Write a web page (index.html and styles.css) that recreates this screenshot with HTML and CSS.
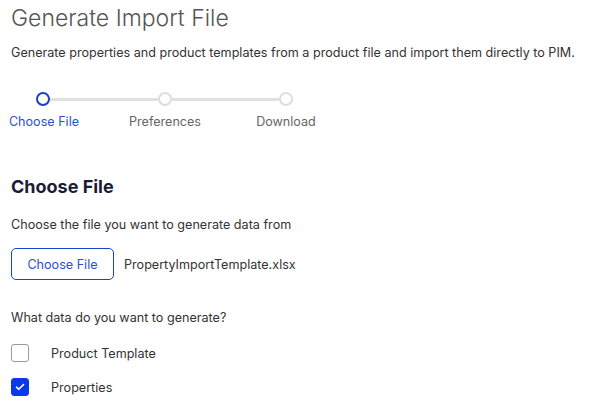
FILE: index.html
```html
<!DOCTYPE html>
<html lang="en">
<head>
    <meta charset="UTF-8">
    <title>Generate Import File</title>
    <link rel="stylesheet" href="styles.css">
</head>
<body>
    <div class="page">
        <h1 class="title">Generate Import File</h1>
        <p class="intro">Generate properties and product templates from a product file and import them directly to PIM.</p>

        <!-- Stepper -->
        <div class="stepper">
            <div class="track">
                <span class="dot active"></span>
                <span class="line"></span>
                <span class="dot"></span>
                <span class="line"></span>
                <span class="dot"></span>
            </div>
            <div class="labels">
                <span class="label active">Choose File</span>
                <span class="label">Preferences</span>
                <span class="label">Download</span>
            </div>
        </div>

        <h2 class="section-title">Choose File</h2>
        <p class="hint">Choose the file you want to generate data from</p>
        <div class="file-row">
            <button type="button" class="btn-outline">Choose File</button>
            <span class="file-name">PropertyImportTemplate.xlsx</span>
        </div>

        <p class="hint question">What data do you want to generate?</p>
        <div class="options">
            <label class="option">
                <span class="box"></span>
                <span>Product Template</span>
            </label>
            <label class="option">
                <span class="box checked">
                    <svg width="10" height="8" viewBox="0 0 10 8"><path d="M1.5 4.2 L3.8 6.3 L8.5 1.6" fill="none" stroke="#fff" stroke-width="1.6" stroke-linecap="round" stroke-linejoin="round"/></svg>
                </span>
                <span>Properties</span>
            </label>
        </div>
    </div>
</body>
</html>
```

FILE: styles.css
```css
* {
    margin: 0;
    padding: 0;
    box-sizing: border-box;
}

body {
    font-family: Inter, "Noto Sans", sans-serif;
    background: #fff;
    color: #333;
}

.page {
    padding: 4px 11px 0;
}

/* Header */
.title {
    font-size: 23px;
    font-weight: 300;
    color: #555;
    line-height: 28px;
}

.intro {
    font-size: 12.6px;
    line-height: 16px;
    color: #333;
    margin-top: 13px;
    white-space: nowrap;
}

/* Stepper */
.stepper {
    margin-top: 31px;
}

.track {
    display: flex;
    align-items: center;
    width: 257px;
    margin-left: 25px;
}

.dot {
    width: 14px;
    height: 14px;
    border-radius: 50%;
    border: 2px solid #ddd;
    flex-shrink: 0;
}

.dot.active {
    border-color: #1a3fc7;
    border-width: 2.5px;
}

.line {
    flex: 1;
    height: 3px;
    background: #e0e0e0;
}

.labels {
    display: flex;
    margin-left: -12px;
    margin-top: 8px;
}

.label {
    width: 90px;
    text-align: center;
    font-size: 12.6px;
    line-height: 16px;
    color: #666;
}

.label + .label {
    margin-left: 31px;
}

.label.active {
    color: #2a52d0;
}

/* Choose file section */
.section-title {
    font-size: 18px;
    font-weight: 700;
    color: #1c1c35;
    margin-top: 46px;
    line-height: 22px;
}

.hint {
    font-size: 12.6px;
    line-height: 16px;
    color: #333;
    margin-top: 19px;
}

.file-row {
    display: flex;
    align-items: center;
    gap: 10px;
    margin-top: 15px;
}

.btn-outline {
    width: 103px;
    height: 32px;
    border: 1px solid #1a44c9;
    border-radius: 5px;
    background: #fff;
    color: #2a52d0;
    font-family: inherit;
    font-size: 12.6px;
}

.file-name {
    font-size: 12.6px;
    color: #333;
}

.question {
    margin-top: 30px;
}

.options {
    display: flex;
    flex-direction: column;
    gap: 16px;
    margin-top: 18px;
}

.option {
    display: flex;
    align-items: center;
    gap: 22px;
    font-size: 12.6px;
    color: #333;
}

.box {
    width: 18px;
    height: 18px;
    border: 1px solid #999;
    border-radius: 3px;
    display: flex;
    align-items: center;
    justify-content: center;
}

.box.checked {
    background: #0a3ae8;
    border-color: #0a3ae8;
}
```
